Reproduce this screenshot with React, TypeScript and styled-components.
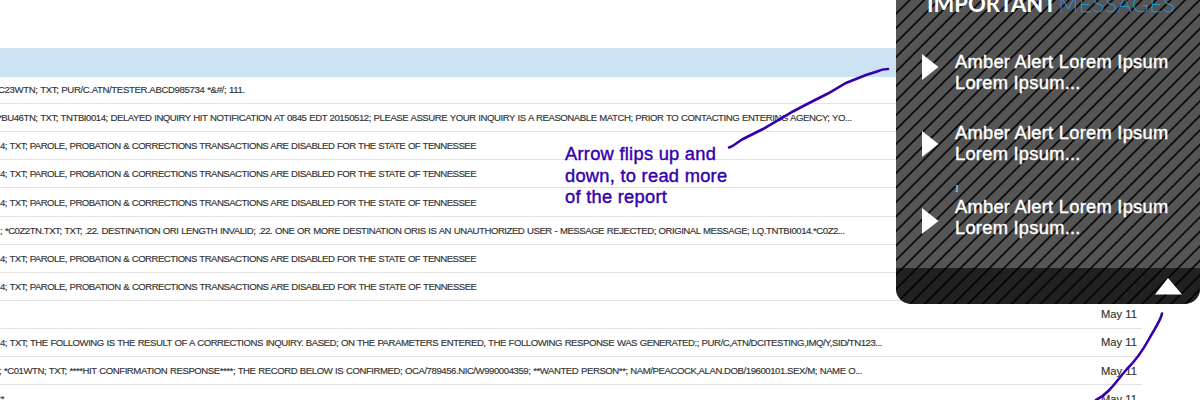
import React from 'react';
import styled, { createGlobalStyle } from 'styled-components';

const GlobalStyle = createGlobalStyle`
  * { box-sizing: border-box; }
  body {
    margin: 0;
    background: #fff;
    overflow: hidden;
    font-family: "Liberation Sans", Arial, sans-serif;
  }
`;

const Page = styled.main`
  position: relative;
  width: 1200px;
  height: 400px;
  overflow: hidden;
  padding-top: 48.4px;
`;

const HeaderBar = styled.div`
  width: 1142px;
  height: 29.1px;
  background: #cce3f3;
`;

const Row = styled.div<{ $first?: boolean }>`
  display: flex;
  align-items: center;
  justify-content: space-between;
  width: 1142px;
  height: ${(p) => (p.$first ? 26.7 : 28.1)}px;
  padding-bottom: ${(p) => (p.$first ? 1.5 : 0)}px;
  border-bottom: 1px solid #e2e2e2;
  color: #333;
`;

const Message = styled.span<{ $start: number; $tracking: number }>`
  margin-left: ${(p) => p.$start}px;
  font-size: 9.6px;
  line-height: 11px;
  -webkit-text-stroke: 0.15px #333;
  letter-spacing: ${(p) => p.$tracking}px;
  word-spacing: 0.5px;
  white-space: pre;
`;

const DateCell = styled.span`
  width: 41px;
  font-size: 11.2px;
  -webkit-text-stroke: 0.15px #333;
  white-space: nowrap;
`;

const Panel = styled.aside`
  position: absolute;
  top: -20px;
  right: 0;
  width: 304px;
  height: 324px;
  display: flex;
  flex-direction: column;
  overflow: hidden;
  border-radius: 0 0 15px 15px;
  background: repeating-linear-gradient(
    135deg,
    #555 0,
    #555 2px,
    #0c0c0c 2.9px,
    #0c0c0c 3.8px,
    #555 4.7px,
    #555 10.25px
  );
  color: #fff;
`;

const Title = styled.h1`
  display: flex;
  margin: 12px 0 0 31px;
  height: 22px;
  font: 700 22px/23px "Lato", sans-serif;
  white-space: nowrap;
`;

const TitleAccent = styled.span`
  margin-left: 2px;
  color: #2595d2;
  font-weight: 100;
  letter-spacing: 0.9px;
  -webkit-text-stroke: 0.6px #2595d2;
`;

const Alerts = styled.div`
  flex: 1;
  padding: 36px 0 0 26px;
`;

const Alert = styled.div<{ $height: number; $arrowTop: number }>`
  display: flex;
  height: ${(p) => p.$height}px;
  svg { margin-top: ${(p) => p.$arrowTop}px; }
`;

const AlertText = styled.p`
  margin: 0.5px 0 0 16px;
  font-size: 18.3px;
  letter-spacing: 0.27px;
  -webkit-text-stroke: 0.4px #fff;
  line-height: 21.5px;
  white-space: nowrap;
`;

const Footer = styled.div`
  display: flex;
  justify-content: flex-end;
  height: 36px;
  padding: 10px 18px 0 0;
  background: rgba(0, 0, 0, 0.61);
`;

const StrayMark = styled.span`
  position: absolute;
  left: 59px;
  top: 203px;
  font: 9px/10px "Liberation Serif", serif;
`;

const Note = styled.p`
  position: absolute;
  left: 565px;
  top: 143px;
  margin: 0;
  color: #3300ad;
  font-size: 18.3px;
  letter-spacing: 0.27px;
  -webkit-text-stroke: 0.4px #3300ad;
  line-height: 21.6px;
  white-space: nowrap;
`;

const Strokes = styled.svg`
  position: absolute;
  inset: 0;
`;

const PAROLE = '4; TXT; PAROLE, PROBATION & CORRECTIONS TRANSACTIONS ARE DISABLED FOR THE STATE OF TENNESSEE';

type RowData = { text: string; start: number; tracking: number; date?: string };

const rows: RowData[] = [
  { text: 'C23WTN; TXT; PUR/C.ATN/TESTER.ABCD985734 *&#/; 111.', start: -2, tracking: -0.36 },
  { text: '*BU46TN; TXT; TNTBI0014; DELAYED INQUIRY HIT NOTIFICATION AT 0845 EDT 20150512; PLEASE ASSURE YOUR INQUIRY IS A REASONABLE MATCH; PRIOR TO CONTACTING ENTERING AGENCY; YO...', start: -2, tracking: -0.45 },
  { text: PAROLE, start: 0, tracking: -0.525 },
  { text: PAROLE, start: 0, tracking: -0.525 },
  { text: PAROLE, start: 0, tracking: -0.525 },
  { text: '; *C0Z2TN.TXT; TXT; .22. DESTINATION ORI LENGTH INVALID; .22. ONE OR MORE DESTINATION ORIS IS AN UNAUTHORIZED USER - MESSAGE REJECTED; ORIGINAL MESSAGE; LQ.TNTBI0014.*C0Z2...', start: 0, tracking: -0.47 },
  { text: PAROLE, start: 0, tracking: -0.525 },
  { text: PAROLE, start: 0, tracking: -0.52 },
  { text: '', start: 0, tracking: 0, date: 'May 11' },
  { text: '4; TXT; THE FOLLOWING IS THE RESULT OF A CORRECTIONS INQUIRY. BASED; ON THE PARAMETERS ENTERED, THE FOLLOWING RESPONSE WAS GENERATED:; PUR/C,ATN/DCITESTING,IMQ/Y,SID/TN123...', start: 0, tracking: -0.467, date: 'May 11' },
  { text: '; *C01WTN; TXT; ****HIT CONFIRMATION RESPONSE****; THE RECORD BELOW IS CONFIRMED; OCA/789456.NIC/W990004359; **WANTED PERSON**; NAM/PEACOCK,ALAN.DOB/19600101.SEX/M; NAME O...', start: -1, tracking: -0.445, date: 'May 11' },
  { text: '**', start: -3, tracking: 0, date: 'May 11' },
];

const alerts = [
  { height: 71, arrowTop: 4 },
  { height: 74, arrowTop: 10 },
  { height: 60, arrowTop: 13 },
];

export default function App() {
  return (
    <Page>
      <GlobalStyle />
      <HeaderBar />
      {rows.map((row, i) => (
        <Row key={i} $first={i === 0}>
          <Message $start={row.start} $tracking={row.tracking}>{row.text}</Message>
          {row.date && <DateCell>{row.date}</DateCell>}
        </Row>
      ))}
      <Panel>
        <Title>IMPORTANT<TitleAccent>MESSAGES</TitleAccent></Title>
        <Alerts>
          {alerts.map((a, i) => (
            <Alert key={i} $height={a.height} $arrowTop={a.arrowTop}>
              <svg width="17" height="26"><path d="M0 0L16.5 13L0 26Z" fill="#fff" /></svg>
              <AlertText>Amber Alert Lorem Ipsum<br />Lorem Ipsum...</AlertText>
            </Alert>
          ))}
        </Alerts>
        <Footer>
          <svg width="27" height="17"><path d="M13 0L27 16.5H0Z" fill="#fff" /></svg>
        </Footer>
        <StrayMark>]</StrayMark>
      </Panel>
      <Note>Arrow flips up and<br />down, to read more<br />of the report</Note>
      <Strokes width="1200" height="400" fill="none" stroke="#3300ad" strokeWidth="2.6" strokeLinecap="round">
        <path d="M729 147.500C733 146.500 737 142.500 742 139.500L763 129L793 111.500C805 105 817 99 828 93.500L846 83L866 75L877 71.500C881 69.500 884 69 888 69" />
        <path d="M1162 313.500C1161 320 1155 328 1149 339C1142 352 1135 361 1127 369C1117 380 1110 393 1096 400" />
      </Strokes>
    </Page>
  );
}
